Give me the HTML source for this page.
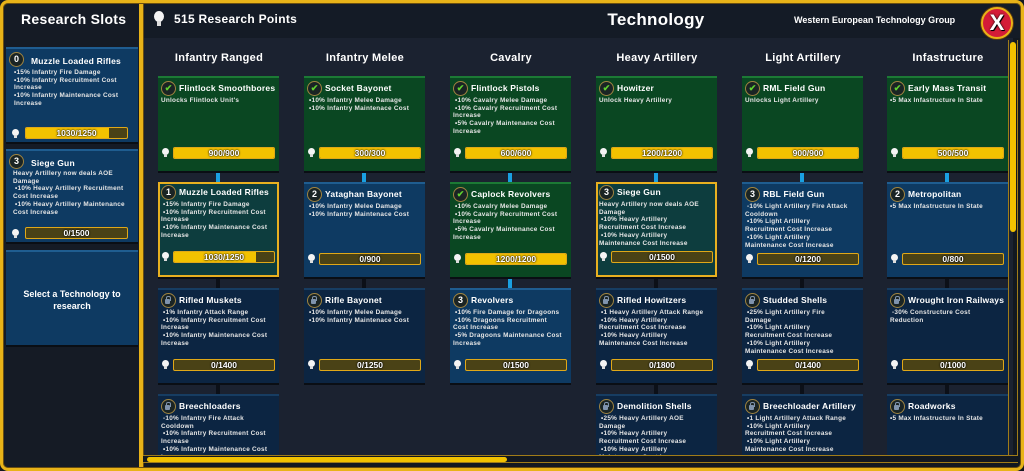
<!DOCTYPE html>
<html><head><meta charset="utf-8"><style>
*{box-sizing:border-box}
body{margin:0;width:1024px;height:471px;overflow:hidden;background:#121820;font-family:"Liberation Sans",sans-serif;font-weight:bold;color:#fff;position:relative}
.frame{position:absolute;left:0;top:0;width:1024px;height:471px;border:3px solid #e8b318;border-radius:8px;box-shadow:inset 0 0 0 1px #6a4e10}
.left{position:absolute;left:3px;top:3px;width:136px;height:465px;background:#151b25}
.div{position:absolute;left:139px;top:3px;width:4px;height:465px;background:#e8b318;box-shadow:1px 0 0 #6a4e10}
.hdr{position:absolute;left:143px;top:3px;width:878px;height:35px;background:#141b26}
.main{position:absolute;left:143px;top:38px;width:870px;height:420px;background:#1b2230}
.c{position:absolute;width:121px;height:95px;background:#0e3a62;border-top:2px solid #1f5d90;box-shadow:0 2px 0 #0a0e14}
.g{background:#0a4722;border-top-color:#1c7a35}
.t{background:#0d3d3e;border:2px solid #e8b020}
.l{background:#0c2542;border-top-color:#173d62}
.c b,.s b{position:absolute;left:21px;top:5px;font-size:8.5px;color:#fff;white-space:nowrap;letter-spacing:.2px}
.c p,.s p{position:absolute;left:3px;top:19px;font-size:6.4px;letter-spacing:.25px;line-height:7.7px;color:#e6e6e6;margin:0;white-space:nowrap}
.t b{left:19px;top:3px}.t p{left:1px;top:17px}
.ic{position:absolute;left:3px;top:3px;width:15px;height:15px;border-radius:50%;border:1px solid #a08440;background:#1a2424;font-size:9px;line-height:13px;text-align:center;font-style:normal;color:#fff}
.t .ic{left:1px;top:1px}
.ok{color:#5fd030}
.lk:before{content:"";position:absolute;left:3px;top:5px;width:5px;height:5px;background:#7f93ad;border-radius:1px}
.lk:after{content:"";position:absolute;left:4px;top:2px;width:3px;height:4px;border:1px solid #7f93ad;border-bottom:0;border-radius:2px 2px 0 0}
.bar{position:absolute;left:15px;top:69px;width:102px;height:12px;border:1px solid #e0a818;background:#4a4216;border-radius:2px;overflow:hidden}
.t .bar{left:13px;top:67px}
.bar s{display:block;height:100%;background:#f2c200}
.bar span{position:absolute;left:0;right:0;top:0;text-align:center;font-size:8.5px;line-height:10px;color:#fff;text-shadow:0 0 2px #000,0 0 1px #000}
.bulb{position:absolute;left:4px;top:70px;width:7px;height:7px;border-radius:50%;background:#f4f4f4}
.bulb:after{content:"";position:absolute;left:2px;top:6px;width:3px;height:3px;background:#ddd}
.t .bulb{left:2px;top:68px}
.ch{position:absolute;top:52px;width:146px;text-align:center;font-size:11px;letter-spacing:.3px;margin-left:-12px}
.ln{position:absolute;width:4px;height:11px;background:#0c1018}
.lb{background:#1aa0e0}
.s{position:absolute;left:6px;width:132px;background:#0e3a62;border-top:2px solid #1f5d90;box-shadow:0 2px 0 #0a0e14}
.s .bar{left:19px;width:103px}
.s .bulb{left:6px}
</style></head><body>
<div class="left"></div>
<div class="hdr"></div>
<div class="main"></div>
<div class="div"></div>

<div style="position:absolute;left:21px;top:11px;font-size:14px;letter-spacing:.3px">Research Slots</div>

<div class="s" style="top:47px;height:95px"><i class="ic" style="left:3px;top:3px">0</i><b style="left:25px;top:7px">Muzzle Loaded Rifles</b><p style="left:8px;top:20px">•15% Infantry Fire Damage<br>•10% Infantry Recruitment Cost<br>Increase<br>•10% Infantry Maintenance Cost<br>Increase</p><span class="bulb" style="top:80px"></span><div class="bar" style="top:78px"><s style="width:82%"></s><span>1030/1250</span></div></div>
<div class="s" style="top:149px;height:93px"><i class="ic" style="left:3px;top:3px">3</i><b style="left:25px;top:7px">Siege Gun</b><p style="left:7px;top:19px">Heavy Artillery now deals AOE<br>Damage<br>&nbsp;•10% Heavy Artillery Recruitment<br>Cost Increase<br>&nbsp;•10% Heavy Artillery Maintenance<br>Cost Increase</p><span class="bulb" style="top:78px"></span><div class="bar" style="top:76px"><span>0/1500</span></div></div>
<div class="s" style="top:250px;height:95px"><div style="position:absolute;left:0;right:0;top:37px;text-align:center;font-size:9px;line-height:11.5px">Select a Technology to<br>research</div></div>

<div style="position:absolute;left:154px;top:11px;width:10px;height:11px;border-radius:50%;background:#f4f4f4"></div>
<div style="position:absolute;left:157px;top:21px;width:4px;height:5px;background:#ddd"></div>
<div style="position:absolute;left:174px;top:12px;font-size:12px;letter-spacing:.3px">515 Research Points</div>
<div style="position:absolute;left:560px;top:10px;width:192px;text-align:center;font-size:17px;letter-spacing:.3px">Technology</div>
<div style="position:absolute;left:794px;top:15px;font-size:9px">Western European Technology Group</div>
<div style="position:absolute;left:981px;top:7px;width:32px;height:32px;border-radius:50%;background:#d41c38;border:2px solid #e8b318;box-shadow:0 0 0 1px #5a3a10;text-align:center;font-size:22px;line-height:27px;color:#fff;text-shadow:0 0 2px #000,1px 1px 0 #000">X</div>

<div class="ch" style="left:158px">Infantry Ranged</div>
<div class="ch" style="left:304px">Infantry Melee</div>
<div class="ch" style="left:450px">Cavalry</div>
<div class="ch" style="left:596px">Heavy Artillery</div>
<div class="ch" style="left:742px">Light Artillery</div>
<div class="ch" style="left:887px">Infastructure</div>

<div class="ln lb" style="left:216px;top:171px"></div><div class="ln lb" style="left:362px;top:171px"></div><div class="ln lb" style="left:508px;top:171px"></div><div class="ln lb" style="left:654px;top:171px"></div><div class="ln lb" style="left:800px;top:171px"></div><div class="ln lb" style="left:945px;top:171px"></div>
<div class="ln" style="left:216px;top:277px"></div><div class="ln" style="left:362px;top:277px"></div><div class="ln lb" style="left:508px;top:277px"></div><div class="ln" style="left:654px;top:277px"></div><div class="ln" style="left:800px;top:277px"></div><div class="ln" style="left:945px;top:277px"></div>
<div class="ln" style="left:216px;top:383px"></div><div class="ln" style="left:654px;top:383px"></div><div class="ln" style="left:800px;top:383px"></div><div class="ln" style="left:945px;top:383px"></div>

<div class="c g" style="left:158px;top:76px"><i class="ic ok">✔</i><b>Flintlock Smoothbores</b><p>Unlocks Flintlock Unit's</p><span class="bulb"></span><div class="bar"><s style="width:100%"></s><span>900/900</span></div></div>
<div class="c g" style="left:304px;top:76px"><i class="ic ok">✔</i><b>Socket Bayonet</b><p>&nbsp;•10% Infantry Melee Damage<br>&nbsp;•10% Infantry Maintenace Cost</p><span class="bulb"></span><div class="bar"><s style="width:100%"></s><span>300/300</span></div></div>
<div class="c g" style="left:450px;top:76px"><i class="ic ok">✔</i><b>Flintlock Pistols</b><p>&nbsp;•10% Cavalry Melee Damage<br>&nbsp;•10% Cavalry Recruitment Cost<br>Increase<br>&nbsp;•5% Cavalry Maintenance Cost<br>Increase</p><span class="bulb"></span><div class="bar"><s style="width:100%"></s><span>600/600</span></div></div>
<div class="c g" style="left:596px;top:76px"><i class="ic ok">✔</i><b>Howitzer</b><p>Unlock Heavy Artillery</p><span class="bulb"></span><div class="bar"><s style="width:100%"></s><span>1200/1200</span></div></div>
<div class="c g" style="left:742px;top:76px"><i class="ic ok">✔</i><b>RML Field Gun</b><p>Unlocks Light Artillery</p><span class="bulb"></span><div class="bar"><s style="width:100%"></s><span>900/900</span></div></div>
<div class="c g" style="left:887px;top:76px"><i class="ic ok">✔</i><b>Early Mass Transit</b><p>•5 Max Infastructure In State</p><span class="bulb"></span><div class="bar"><s style="width:100%"></s><span>500/500</span></div></div>

<div class="c t" style="left:158px;top:182px"><i class="ic">1</i><b>Muzzle Loaded Rifles</b><p>&nbsp;•15% Infantry Fire Damage<br>&nbsp;•10% Infantry Recruitment Cost<br>Increase<br>&nbsp;•10% Infantry Maintenance Cost<br>Increase</p><span class="bulb"></span><div class="bar"><s style="width:82%"></s><span>1030/1250</span></div></div>
<div class="c" style="left:304px;top:182px"><i class="ic">2</i><b>Yataghan Bayonet</b><p>&nbsp;•10% Infantry Melee Damage<br>&nbsp;•10% Infantry Maintenace Cost</p><span class="bulb"></span><div class="bar"><span>0/900</span></div></div>
<div class="c g" style="left:450px;top:182px"><i class="ic ok">✔</i><b>Caplock Revolvers</b><p>&nbsp;•10% Cavalry Melee Damage<br>&nbsp;•10% Cavalry Recruitment Cost<br>Increase<br>&nbsp;•5% Cavalry Maintenance Cost<br>Increase</p><span class="bulb"></span><div class="bar"><s style="width:100%"></s><span>1200/1200</span></div></div>
<div class="c t" style="left:596px;top:182px"><i class="ic">3</i><b>Siege Gun</b><p>Heavy Artillery now deals AOE<br>Damage<br>&nbsp;•10% Heavy Artillery<br>Recruitment Cost Increase<br>&nbsp;•10% Heavy Artillery<br>Maintenance Cost Increase</p><span class="bulb"></span><div class="bar"><span>0/1500</span></div></div>
<div class="c" style="left:742px;top:182px"><i class="ic">3</i><b>RBL Field Gun</b><p>&nbsp;-10% Light Artillery Fire Attack<br>Cooldown<br>&nbsp;•10% Light Artillery<br>Recruitment Cost Increase<br>&nbsp;•10% Light Artillery<br>Maintenance Cost Increase</p><span class="bulb"></span><div class="bar"><span>0/1200</span></div></div>
<div class="c" style="left:887px;top:182px"><i class="ic">2</i><b>Metropolitan</b><p>•5 Max Infastructure In State</p><span class="bulb"></span><div class="bar"><span>0/800</span></div></div>

<div class="c l" style="left:158px;top:288px"><i class="ic lk"></i><b>Rifled Muskets</b><p>&nbsp;•1% Infantry Attack Range<br>&nbsp;•10% Infantry Recruitment Cost<br>Increase<br>&nbsp;•10% Infantry Maintenance Cost<br>Increase</p><span class="bulb"></span><div class="bar"><span>0/1400</span></div></div>
<div class="c l" style="left:304px;top:288px"><i class="ic lk"></i><b>Rifle Bayonet</b><p>&nbsp;•10% Infantry Melee Damage<br>&nbsp;•10% Infantry Maintenace Cost</p><span class="bulb"></span><div class="bar"><span>0/1250</span></div></div>
<div class="c" style="left:450px;top:288px"><i class="ic">3</i><b>Revolvers</b><p>&nbsp;•10% Fire Damage for Dragoons<br>&nbsp;•10% Dragoons Recruitment<br>Cost Increase<br>&nbsp;•5% Dragoons Maintenance Cost<br>Increase</p><span class="bulb"></span><div class="bar"><span>0/1500</span></div></div>
<div class="c l" style="left:596px;top:288px"><i class="ic lk"></i><b>Rifled Howitzers</b><p>&nbsp;•1 Heavy Artillery Attack Range<br>&nbsp;•10% Heavy Artillery<br>Recruitment Cost Increase<br>&nbsp;•10% Heavy Artillery<br>Maintenance Cost Increase</p><span class="bulb"></span><div class="bar"><span>0/1800</span></div></div>
<div class="c l" style="left:742px;top:288px"><i class="ic lk"></i><b>Studded Shells</b><p>&nbsp;•25% Light Artillery Fire<br>Damage<br>&nbsp;•10% Light Artillery<br>Recruitment Cost Increase<br>&nbsp;•10% Light Artillery<br>Maintenance Cost Increase</p><span class="bulb"></span><div class="bar"><span>0/1400</span></div></div>
<div class="c l" style="left:887px;top:288px"><i class="ic lk"></i><b>Wrought Iron Railways</b><p>&nbsp;-30% Constructure Cost<br>Reduction</p><span class="bulb"></span><div class="bar"><span>0/1000</span></div></div>

<div class="c l" style="left:158px;top:394px;height:64px"><i class="ic lk"></i><b>Breechloaders</b><p>&nbsp;-10% Infantry Fire Attack<br>Cooldown<br>&nbsp;•10% Infantry Recruitment Cost<br>Increase<br>&nbsp;•10% Infantry Maintenance Cost<br>Increase</p></div>
<div class="c l" style="left:596px;top:394px;height:64px"><i class="ic lk"></i><b>Demolition Shells</b><p>&nbsp;•25% Heavy Artillery AOE<br>Damage<br>&nbsp;•10% Heavy Artillery<br>Recruitment Cost Increase<br>&nbsp;•10% Heavy Artillery<br>Maintenance Cost Increase</p></div>
<div class="c l" style="left:742px;top:394px;height:64px"><i class="ic lk"></i><b>Breechloader Artillery</b><p>&nbsp;•1 Light Artillery Attack Range<br>&nbsp;•10% Light Artillery<br>Recruitment Cost Increase<br>&nbsp;•10% Light Artillery<br>Maintenance Cost Increase</p></div>
<div class="c l" style="left:887px;top:394px;height:64px"><i class="ic lk"></i><b>Roadworks</b><p>•5 Max Infastructure In State</p></div>

<div style="position:absolute;left:1008px;top:40px;width:10px;height:420px;border-left:1px solid #a07c18;border-right:1px solid #a07c18"></div>
<div style="position:absolute;left:1010px;top:42px;width:6px;height:190px;background:#f2c200;border-radius:3px"></div>
<div style="position:absolute;left:143px;top:455px;width:875px;height:8px;border-top:1px solid #a07c18;border-bottom:1px solid #a07c18;background:#121820"></div>
<div style="position:absolute;left:147px;top:457px;width:360px;height:5px;background:#f2c200;border-radius:3px"></div>
<div class="frame"></div>
</body></html>
